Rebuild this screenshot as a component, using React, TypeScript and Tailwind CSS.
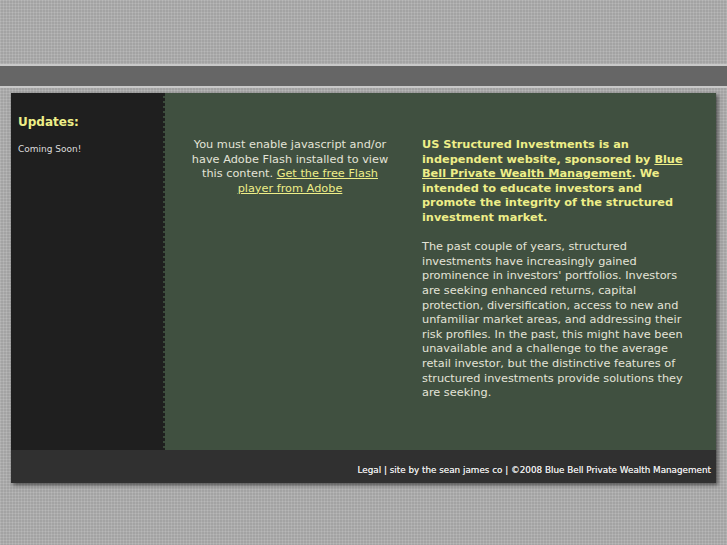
export default function App() {
  return (
    <div
      className="min-h-[545px] w-full bg-[#a3a3a3] bg-[linear-gradient(rgba(255,255,255,0.12)_1px,transparent_1px),linear-gradient(90deg,rgba(255,255,255,0.12)_1px,transparent_1px)] bg-[length:3px_3px] pt-[64px] pb-[40px] font-['DejaVu_Sans',sans-serif]"
    >
      {/* top band */}
      <div className="h-[24px] border-y-2 border-[#c9c9c9] bg-[#666666]" />

      {/* main box */}
      <div className="ml-[11px] mt-[5px] w-[705px] shadow-[2px_2px_4px_rgba(0,0,0,0.55)]">
        <div className="flex h-[357px]">
          {/* sidebar */}
          <div className="w-[152px] bg-[#1f1f1f] pl-[7px] pt-[21px]">
            <div className="text-[12px] font-bold leading-4 text-[#eeee88]">Updates:</div>
            <div className="mt-[13px] text-[9px] leading-3 text-[#dddddd]">Coming Soon!</div>
          </div>

          {/* perforated edge */}
          <div className="w-[2px] bg-[#1f1f1f] bg-[repeating-linear-gradient(180deg,#1f1f1f_0px,#1f1f1f_3px,#3a4a3a_3px,#3a4a3a_5px)]" />

          {/* green content */}
          <div className="flex flex-1 bg-[#405040] pt-[45px] text-[11.3px] leading-[14.6px] text-[#e4e4d8]">
            <div className="ml-[22px] w-[206px] text-center">
              You must enable javascript and/or have Adobe Flash installed to view this content.{' '}
              <a className="text-[#eeee88] underline">Get the free Flash player from Adobe</a>
            </div>

            <div className="ml-[29px] w-[272px]">
              <p className="font-bold text-[#eeee88]">
                US Structured Investments is an independent website, sponsored by{' '}
                <a className="underline">Blue Bell Private Wealth Management</a>. We intended to
                educate investors and promote the integrity of the structured investment market.
              </p>
              <p className="mt-[14.6px]">
                The past couple of years, structured investments have increasingly gained
                prominence in investors' portfolios. Investors are seeking enhanced returns,
                capital protection, diversification, access to new and unfamiliar market areas,
                and addressing their risk profiles. In the past, this might have been unavailable
                and a challenge to the average retail investor, but the distinctive features of
                structured investments provide solutions they are seeking.
              </p>
            </div>
          </div>
        </div>

        {/* footer */}
        <div className="flex h-[33px] items-center justify-end bg-[#303030] pr-[5px] pt-[9px] text-[8.8px] font-medium text-[#e6e6e6] [text-shadow:0_0_0.4px_#e6e6e6]">
          Legal | site by the sean james co | ©2008 Blue Bell Private Wealth Management
        </div>
      </div>
    </div>
  );
}
